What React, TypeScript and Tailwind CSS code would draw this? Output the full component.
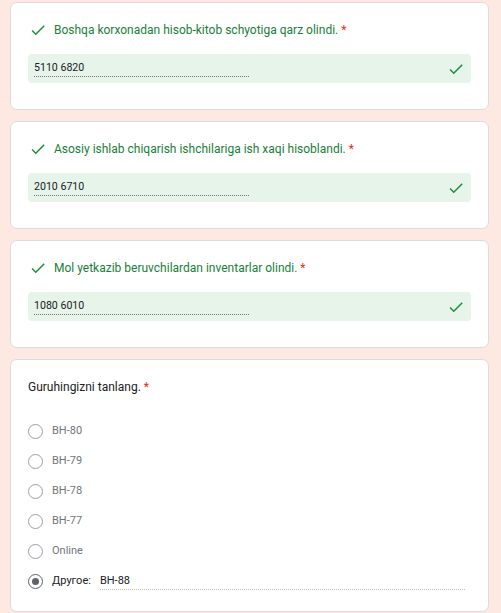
import React from 'react';

const font = { fontFamily: 'Roboto, "Liberation Sans", sans-serif' };

const Check = ({ className }: { className?: string }) => (
  <svg viewBox="0 0 24 24" className={className} fill="currentColor">
    <path d="M9 16.17L4.83 12l-1.42 1.41L9 19 21 7l-1.41-1.41z" />
  </svg>
);

const answers = [
  { q: 'Boshqa korxonadan hisob-kitob schyotiga qarz olindi.', a: '5110 6820' },
  { q: 'Asosiy ishlab chiqarish ishchilariga ish xaqi hisoblandi.', a: '2010 6710' },
  { q: 'Mol yetkazib beruvchilardan inventarlar olindi.', a: '1080 6010' },
];

const groups = ['BH-80', 'BH-79', 'BH-78', 'BH-77', 'Online'];

const Card = ({ children, className = '' }: { children: React.ReactNode; className?: string }) => (
  <div className={`ml-[10px] w-[479px] rounded-[7px] border border-[#dadce0] bg-white px-[17px] ${className}`}>
    {children}
  </div>
);

export default function App() {
  return (
    <div className="h-[613px] overflow-hidden bg-[#fde9e2] pt-[2px] text-[#202124]" style={font}>
      <div className="flex flex-col gap-[11px]">
        {answers.map((item) => (
          <Card key={item.a} className="pt-[17px] pb-[26px]">
            <div className="flex h-5 items-center gap-[7px] pl-[1px]">
              <Check className="h-[18px] w-[18px] text-[#1e8e3e]" />
              <span className="text-[12px] text-[#188038]">
                {item.q} <span className="text-[#d93025]">*</span>
              </span>
            </div>
            <div className="mt-[14px] flex h-[29px] items-center justify-between rounded-[4px] bg-[#e6f4ea] pl-[6px] pr-[6px]">
              <div className="w-[215px] border-b border-dotted border-[#70757a] pb-[1px] text-[10.6px] leading-[15px] text-[#202124]">
                {item.a}
              </div>
              <Check className="h-[18px] w-[18px] text-[#1e8e3e]" />
            </div>
          </Card>
        ))}

        <Card className="pt-[17px] pb-[15px]">
          <div className="flex h-5 items-center text-[12px] text-[#202124]">
            Guruhingizni tanlang.&nbsp;<span className="text-[#d93025]">*</span>
          </div>
          <div className="mt-[19px] flex flex-col">
            {groups.map((g) => (
              <div key={g} className="flex h-[30px] items-center gap-[9px]">
                <div className="h-[15px] w-[15px] rounded-full border-[1.5px] border-[#9aa0a6]" />
                <span className="text-[11px] text-[#70757a]">{g}</span>
              </div>
            ))}
            <div className="flex h-[30px] items-center gap-[9px]">
              <div className="flex h-[15px] w-[15px] items-center justify-center rounded-full border-[1.5px] border-[#5f6368]">
                <div className="h-[7px] w-[7px] rounded-full bg-[#5f6368]" />
              </div>
              <span className="text-[11px] text-[#202124]">Другое:</span>
              <div className="w-[365px] border-b border-dotted border-[#bdc1c6] pb-[1px] text-[11px] leading-[15px] text-[#202124]">
                BH-88
              </div>
            </div>
          </div>
        </Card>
      </div>
    </div>
  );
}
